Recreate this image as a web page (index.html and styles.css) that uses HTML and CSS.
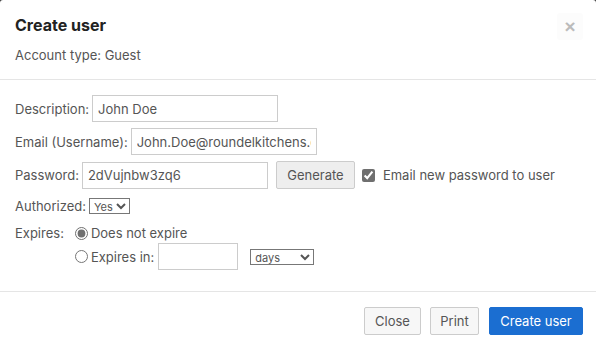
FILE: index.html
```html
<!DOCTYPE html>
<html lang="en">
<head>
  <meta charset="UTF-8" />
  <title>Create user</title>
  <meta name="viewport" content="width=device-width, initial-scale=1.0" />
  <link rel="stylesheet" href="styles.css">
</head>
<body>
  <div class="modal">
    <header class="modal-header">
      <div class="header-top">
        <h1>Create user</h1>
        <button class="close-x" title="Close">&times;</button>
      </div>
      <div class="account-type">Account type: Guest</div>
    </header>

    <main class="modal-body">
      <div class="form-row">
        <label for="desc">Description:</label>
        <input class="text-input" id="desc" type="text" value="John Doe" />
      </div>
      <div class="form-row">
        <label for="email">Email (Username):</label>
        <input class="text-input" id="email" type="text" value="John.Doe@roundelkitchens.com" />
      </div>
      <div class="form-row form-row-pw">
        <label for="pw">Password:</label>
        <input class="text-input" id="pw" type="text" value="2dVujnbw3zq6" />
        <button class="btn btn-generate">Generate</button>
        <label class="check-label"><input type="checkbox" checked /> Email new password to user</label>
      </div>
      <div class="form-row form-row-small">
        <label for="auth">Authorized:</label>
        <select id="auth" class="small-select">
          <option>Yes</option>
          <option>No</option>
        </select>
      </div>
      <div class="expires">
        <span class="expires-label">Expires:</span>
        <div class="expires-options">
          <label class="radio-row"><input type="radio" name="exp" checked /> Does not expire</label>
          <div class="radio-row radio-row-in">
            <label><input type="radio" name="exp" /> Expires in:</label>
            <input class="text-input days-input" type="text" value="" />
            <select class="small-select days-select">
              <option>days</option>
              <option>weeks</option>
              <option>months</option>
            </select>
          </div>
        </div>
      </div>
    </main>

    <footer class="modal-footer">
      <button class="btn btn-close">Close</button>
      <button class="btn btn-print">Print</button>
      <button class="btn btn-primary">Create user</button>
    </footer>
  </div>
</body>
</html>
```

FILE: styles.css
```css
html {
  background: #3a3a3a;
}
body {
  margin: 0;
  padding: 0;
  font-family: Inter, "Noto Sans", sans-serif;
  font-size: 13px;
  color: #555;
}
.modal {
  width: 596px;
  height: 348px;
  background: #fff;
  border-radius: 3px 3px 0 0;
  box-sizing: border-box;
}
/* Header */
.modal-header {
  padding: 13px 13px 14px 15px;
  border-bottom: 1px solid #e5e5e5;
}
.header-top {
  display: flex;
  justify-content: space-between;
  align-items: flex-start;
}
h1 {
  margin: 0;
  font-size: 16px;
  font-weight: 700;
  line-height: 24px;
  color: #222;
}
.close-x {
  width: 26px;
  height: 27px;
  border: none;
  border-radius: 3px;
  background: #fcfcfc;
  color: #bbb;
  font-family: Arial, "Liberation Sans", sans-serif;
  font-size: 19px;
  font-weight: 700;
  line-height: 27px;
  padding: 0;
  cursor: pointer;
}
.account-type {
  margin-top: 5px;
  line-height: 20px;
}
/* Body */
.modal-body {
  display: flex;
  flex-direction: column;
  gap: 6px;
  padding: 15px 15px 21px 15px;
  border-bottom: 1px solid #e5e5e5;
}
.form-row {
  display: flex;
  align-items: center;
  gap: 3px;
  height: 27px;
}
.form-row-pw {
  height: 28px;
}
.form-row-small {
  height: 22px;
}
.text-input {
  width: 186px;
  height: 27px;
  box-sizing: border-box;
  border: 1px solid #ccc;
  border-radius: 0;
  padding: 0 5px;
  font-family: inherit;
  font-size: 13px;
  color: #555;
  outline: none;
}
.btn {
  height: 28px;
  padding: 0;
  border: 1px solid #ccc;
  border-radius: 2px;
  background: #f7f7f7;
  color: #555;
  font-family: inherit;
  font-size: 13px;
  cursor: pointer;
}
.btn-generate {
  margin-left: 5px;
  width: 79px;
  background: #eee;
}
.check-label {
  display: flex;
  align-items: center;
  gap: 8px;
  margin-left: 4px;
}
.check-label input,
.radio-row input[type="radio"] {
  margin: 0;
  width: 13px;
  height: 13px;
  accent-color: #6f6f6f;
}
.small-select {
  font-family: inherit;
  font-size: 11px;
  color: #555;
  height: 16px;
  padding: 0;
  border: 1px solid #777;
  border-radius: 0;
  background: #fff;
}
/* Expires group */
.expires {
  display: flex;
  gap: 11px;
}
.expires-label {
  line-height: 20px;
}
.expires-options {
  display: flex;
  flex-direction: column;
}
.radio-row {
  display: flex;
  align-items: center;
  gap: 3px;
  line-height: 20px;
}
.radio-row label {
  display: flex;
  align-items: center;
  gap: 3px;
}
.radio-row-in {
  height: 27px;
}
.days-input {
  width: 80px;
  margin-left: 1px;
}
.days-select {
  width: 64px;
  margin-left: 9px;
}
/* Footer */
.modal-footer {
  display: flex;
  justify-content: flex-end;
  gap: 9px;
  padding: 15px 13px 0 0;
}
.btn-close {
  width: 57px;
}
.btn-print {
  width: 49px;
}
.btn-primary {
  width: 94px;
  margin-left: 1px;
  background: #1b6ed1;
  border-color: #1b6ed1;
  color: #fff;
}
```
